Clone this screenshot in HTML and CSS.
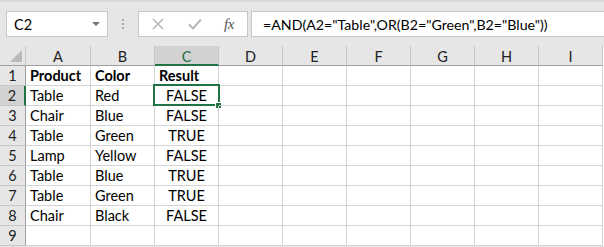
FILE: index.html
```html
<!DOCTYPE html>
<html>
<head>
<meta charset="utf-8">
<link rel="stylesheet" href="styles.css">
</head>
<body>
<div class="app">
  <div class="toolbar">
    <div class="namebox"><span class="name">C2</span><span class="caret"></span></div>
    <div class="grip"><i></i><i></i><i></i></div>
    <div class="fbuttons">
      <svg class="ico" width="14" height="14" viewBox="0 0 14 14"><path d="M2 2L12 12M12 2L2 12" stroke="#b8b8b8" stroke-width="1.6" fill="none"/></svg>
      <svg class="ico" width="16" height="14" viewBox="0 0 16 14"><path d="M2 7.5L6 11.5L14 2.5" stroke="#b8b8b8" stroke-width="2" fill="none"/></svg>
      <span class="fx">fx</span>
    </div>
    <div class="formula">=AND(A2="Table",OR(B2="Green",B2="Blue"))</div>
  </div>
  <div class="sheet">
    <div class="corner"><span class="tri"></span></div>
    <div class="ch">A</div><div class="ch">B</div><div class="ch sel">C</div><div class="ch">D</div><div class="ch">E</div><div class="ch">F</div><div class="ch">G</div><div class="ch">H</div><div class="ch">I</div>

    <div class="rh">1</div><div class="c b">Product</div><div class="c b">Color</div><div class="c b">Result</div><div class="c"></div><div class="c"></div><div class="c"></div><div class="c"></div><div class="c"></div><div class="c"></div>
    <div class="rh sel">2</div><div class="c">Table</div><div class="c">Red</div><div class="c m active">FALSE<span class="box"></span><span class="handle"></span></div><div class="c"></div><div class="c"></div><div class="c"></div><div class="c"></div><div class="c"></div><div class="c"></div>
    <div class="rh">3</div><div class="c">Chair</div><div class="c">Blue</div><div class="c m">FALSE</div><div class="c"></div><div class="c"></div><div class="c"></div><div class="c"></div><div class="c"></div><div class="c"></div>
    <div class="rh">4</div><div class="c">Table</div><div class="c">Green</div><div class="c m">TRUE</div><div class="c"></div><div class="c"></div><div class="c"></div><div class="c"></div><div class="c"></div><div class="c"></div>
    <div class="rh">5</div><div class="c">Lamp</div><div class="c">Yellow</div><div class="c m">FALSE</div><div class="c"></div><div class="c"></div><div class="c"></div><div class="c"></div><div class="c"></div><div class="c"></div>
    <div class="rh">6</div><div class="c">Table</div><div class="c">Blue</div><div class="c m">TRUE</div><div class="c"></div><div class="c"></div><div class="c"></div><div class="c"></div><div class="c"></div><div class="c"></div>
    <div class="rh">7</div><div class="c">Table</div><div class="c">Green</div><div class="c m">TRUE</div><div class="c"></div><div class="c"></div><div class="c"></div><div class="c"></div><div class="c"></div><div class="c"></div>
    <div class="rh">8</div><div class="c">Chair</div><div class="c">Black</div><div class="c m">FALSE</div><div class="c"></div><div class="c"></div><div class="c"></div><div class="c"></div><div class="c"></div><div class="c"></div>
    <div class="rh">9</div><div class="c"></div><div class="c"></div><div class="c"></div><div class="c"></div><div class="c"></div><div class="c"></div><div class="c"></div><div class="c"></div><div class="c"></div>
  </div>
</div>
</body>
</html>
```

FILE: styles.css
```css
* { box-sizing: border-box; }
html, body { margin: 0; padding: 0; }
body {
  width: 604px;
  height: 247px;
  overflow: hidden;
  background: #e6e6e6;
  font-family: Lato, "Liberation Sans", sans-serif;
  color: #000;
}
.app { width: 604px; height: 247px; border-top: 2px solid #dadada; }
.toolbar {
  height: 44px;
  display: flex;
  align-items: flex-start;
  padding: 9px 0 0 6px;
}
.namebox {
  width: 102px;
  height: 26px;
  background: #fff;
  border: 1px solid #c6c6c6;
  display: flex;
  align-items: center;
  justify-content: space-between;
  padding: 0 6px 0 7px;
  font-size: 14.5px;
  color: #000;
}
.caret {
  width: 0; height: 0;
  border-left: 4px solid transparent;
  border-right: 4px solid transparent;
  border-top: 4px solid #777;
  margin-right: 1px;
}
.grip {
  width: 30px;
  height: 26px;
  display: flex;
  flex-direction: column;
  align-items: center;
  justify-content: center;
  gap: 2px;
}
.grip i { display: block; width: 2px; height: 2px; background: #a6a6a6; }
.fbuttons {
  width: 110px;
  height: 26px;
  background: #fff;
  border: 1px solid #c6c6c6;
  display: flex;
  align-items: center;
  padding: 0 0 0 12px;
}
.fbuttons .ico { display: block; }
.fbuttons .ico:first-child { margin-right: 22px; }
.fbuttons .ico:nth-child(2) { margin-right: 21px; }
.fx {
  font-family: "Liberation Serif", serif;
  font-style: italic;
  font-size: 15px;
  color: #555;
  letter-spacing: -0.5px;
}
.formula {
  margin-left: 3px;
  width: 353px;
  height: 26px;
  background: #fff;
  border: 1px solid #c6c6c6;
  border-right: none;
  display: flex;
  align-items: center;
  padding-left: 11px;
  font-size: 14.2px;
  color: #000;
}
.sheet {
  display: grid;
  grid-template-columns: 26px 65px repeat(8, 64px);
  grid-template-rows: repeat(10, 20px);
  background: #fff;
  width: 604px;
}
.corner {
  background: #e6e6e6;
  border-right: 1px solid #c6c6c6;
  border-bottom: 1px solid #9f9f9f;
  position: relative;
}
.tri {
  position: absolute;
  right: 3px;
  bottom: 3px;
  width: 0; height: 0;
  border-left: 12px solid transparent;
  border-bottom: 12px solid #b9b9b9;
}
.ch {
  background: #e6e6e6;
  border-right: 1px solid #c6c6c6;
  border-bottom: 1px solid #9f9f9f;
  display: flex;
  align-items: center;
  justify-content: center;
  font-size: 14.5px;
  color: #222;
  padding-top: 1px;
}
.ch.sel {
  background: #d2d2d2;
  color: #217346;
  border-bottom: 2px solid #217346;
  padding-top: 2px;
}
.rh {
  background: #e6e6e6;
  border-right: 1px solid #9f9f9f;
  border-bottom: 1px solid #c6c6c6;
  display: flex;
  align-items: center;
  justify-content: center;
  font-size: 14.5px;
  color: #222;
}
.rh.sel {
  background: #d2d2d2;
  border-right: 2px solid #217346;
  color: #222;
}
.c {
  border-right: 1px solid #d4d4d4;
  border-bottom: 1px solid #d4d4d4;
  font-size: 14.5px;
  line-height: 19px;
  padding-left: 4px;
  white-space: nowrap;
  position: relative;
}
.c.b { font-weight: bold; }
.c.m { text-align: center; padding-left: 0; }
.box {
  position: absolute;
  left: -2px; top: -2px; right: -2px; bottom: -1px;
  border: 2px solid #217346;
}
.handle {
  position: absolute;
  right: -3px;
  bottom: -3px;
  width: 5px;
  height: 5px;
  background: #217346;
  border: 1px solid #fff;
  box-sizing: content-box;
  margin: -1px;
}
```
